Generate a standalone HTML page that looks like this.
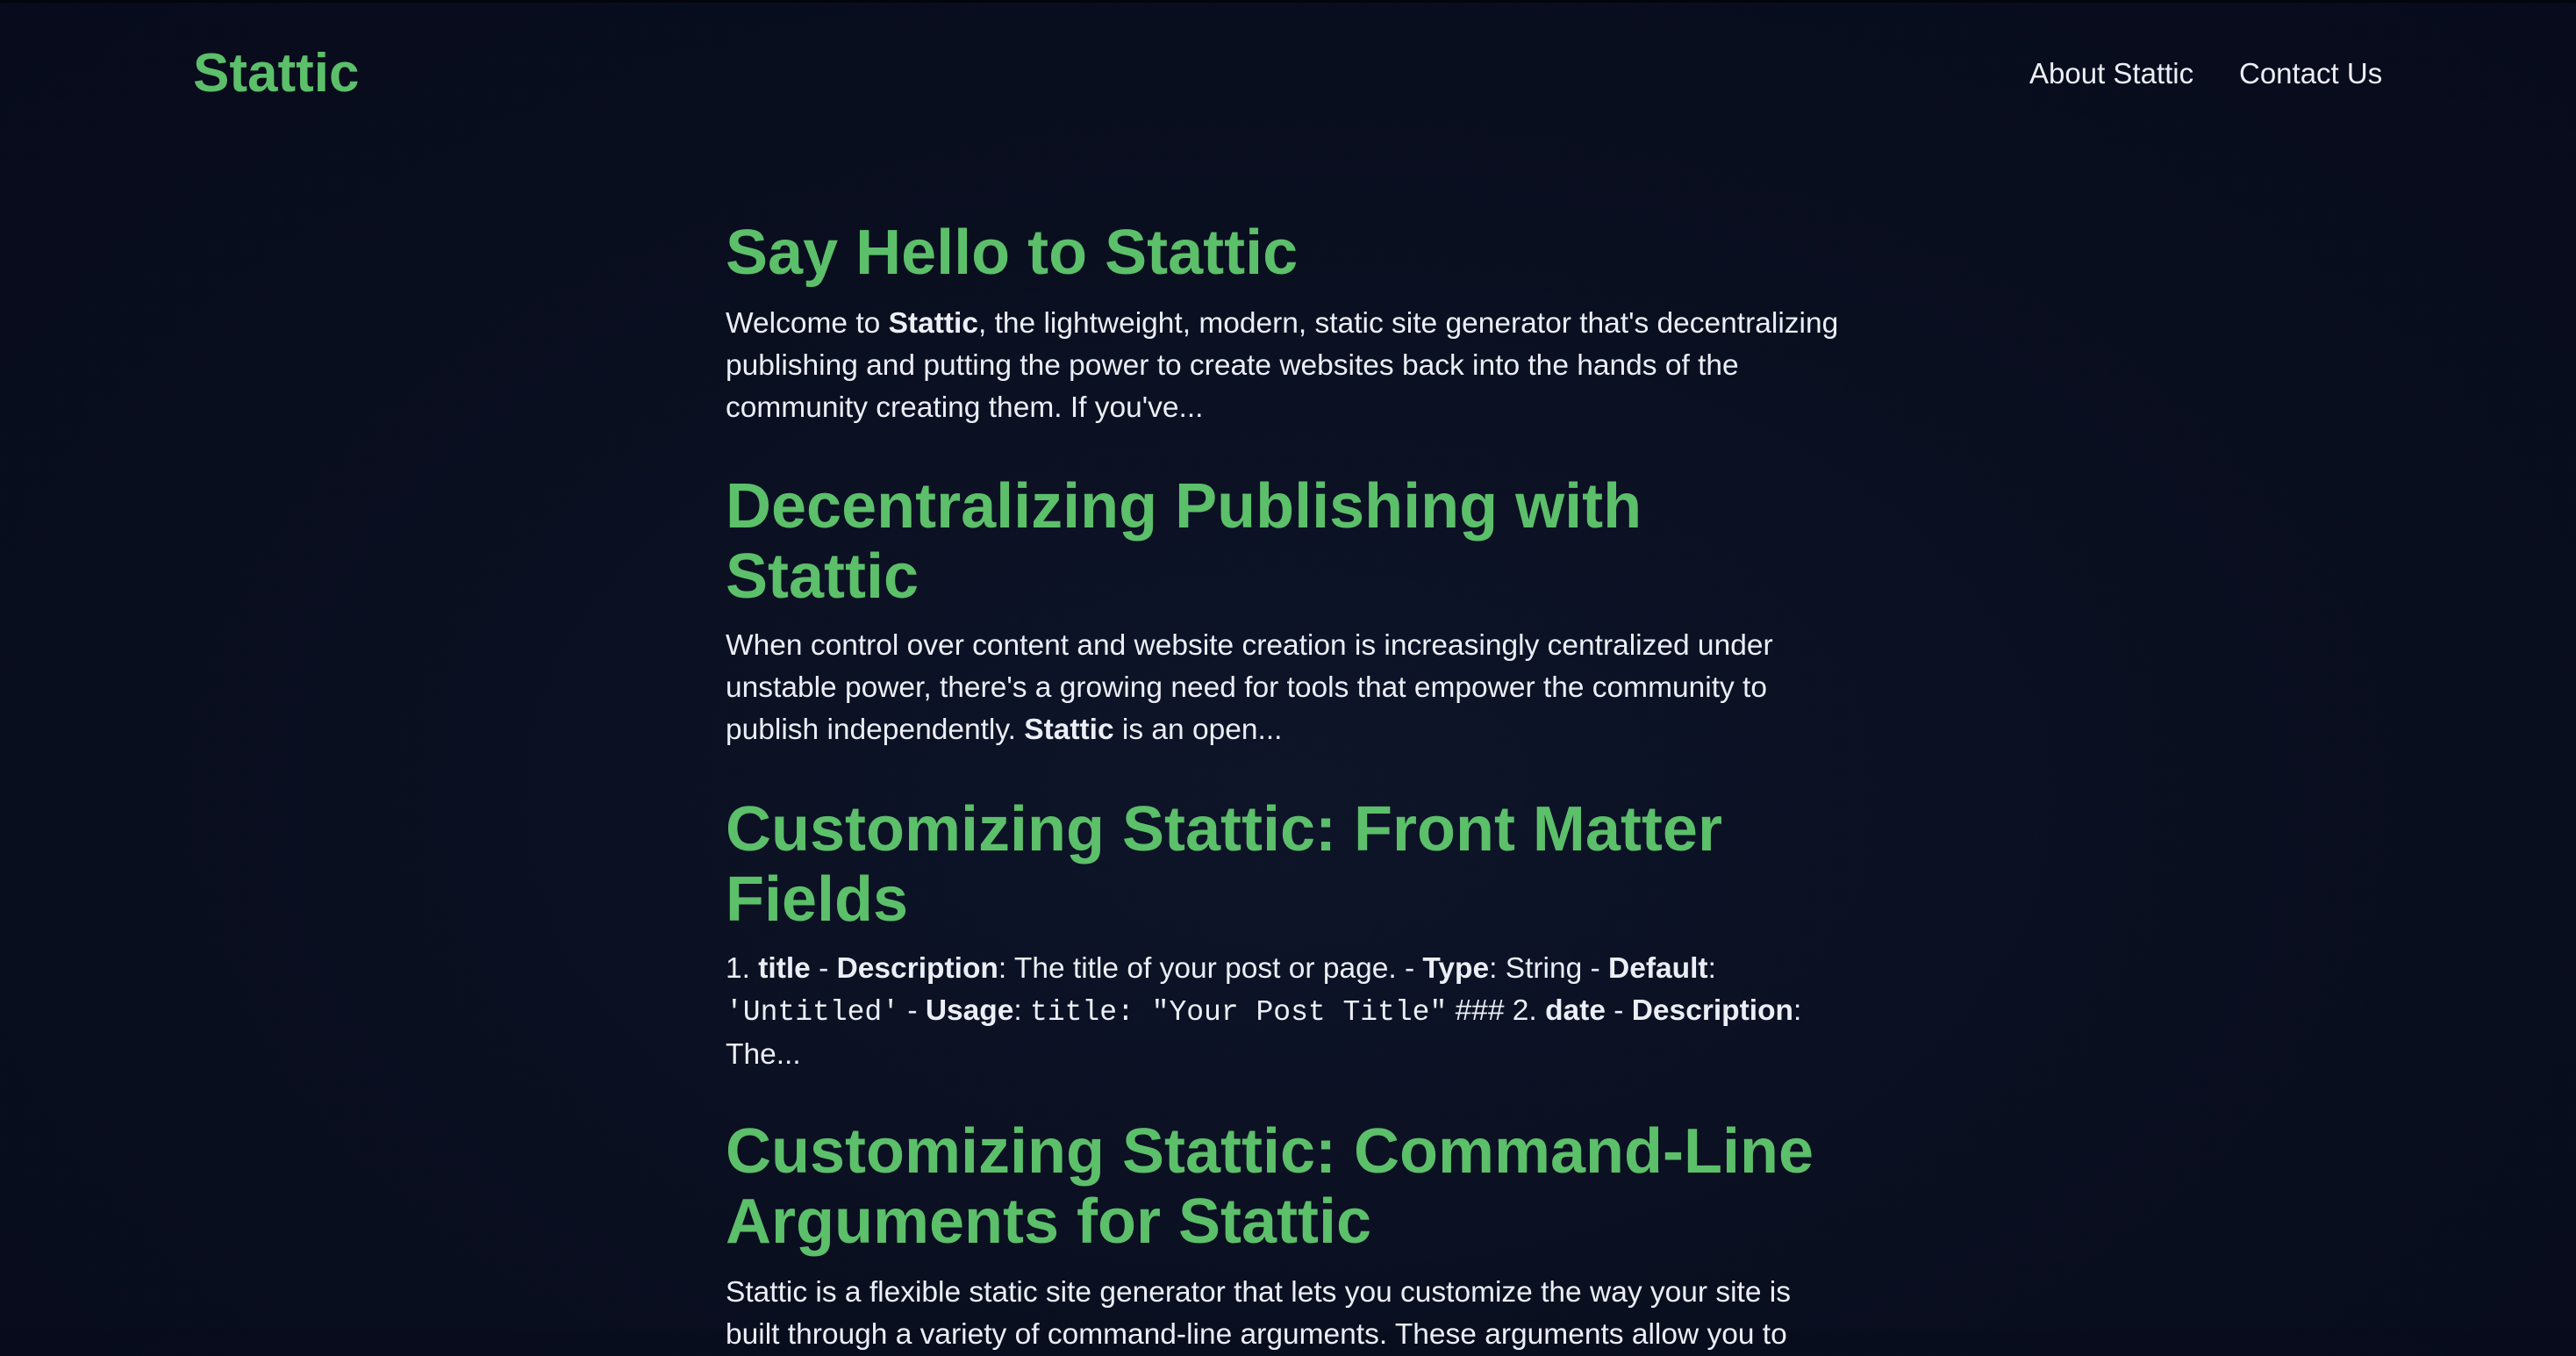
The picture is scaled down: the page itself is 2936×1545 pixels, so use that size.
<!DOCTYPE html>
<html><head><meta charset="utf-8"><style>
html,body{margin:0;padding:0}
body{width:2936px;height:1514px;overflow:hidden;position:relative;
background:radial-gradient(ellipse at 50% 60%,#0e1529 0%,#0a0f20 50%,#070b1b 100%);
font-family:"Liberation Sans",sans-serif;color:#eceef6}
.topline{position:absolute;left:0;top:0;width:100%;height:3px;background:#03050c}
.logo{position:absolute;left:220px;top:48px;font-size:62px;font-weight:bold;color:#5cbf6a;line-height:72px}
.nav{position:absolute;top:64px;font-size:33px;line-height:40px;color:#eceef6}
.h{position:absolute;left:827px;font-size:72px;font-weight:bold;color:#5cbf6a;line-height:80px;letter-spacing:0;white-space:nowrap;margin:0}
.p{position:absolute;left:827px;font-size:33.5px;line-height:48px;letter-spacing:0;white-space:nowrap;margin:0}
code{font-family:"Liberation Mono",monospace;font-size:33px}
</style></head><body>
<div class="topline"></div>
<div class="logo">Stattic</div>
<div class="nav" style="left:2313px">About Stattic</div>
<div class="nav" style="left:2552px">Contact Us</div>

<h1 class="h" style="top:248px">Say Hello to Stattic</h1>
<p class="p" style="top:345px">Welcome to <b>Stattic</b>, the lightweight, modern, static site generator that's decentralizing<br>publishing and putting the power to create websites back into the hands of the<br>community creating them. If you've...</p>

<h1 class="h" style="top:537px">Decentralizing Publishing with<br>Stattic</h1>
<p class="p" style="top:712px">When control over content and website creation is increasingly centralized under<br>unstable power, there's a growing need for tools that empower the community to<br>publish independently. <b>Stattic</b> is an open...</p>

<h1 class="h" style="top:905px">Customizing Stattic: Front Matter<br>Fields</h1>
<p class="p" style="top:1080px">1. <b>title</b> - <b>Description</b>: The title of your post or page. - <b>Type</b>: String - <b>Default</b>:<br><code>'Untitled'</code> - <b>Usage</b>: <code>title: "Your Post Title"</code> ### 2. <b>date</b> - <b>Description</b>:<br>The...</p>

<h1 class="h" style="top:1272px">Customizing Stattic: Command-Line<br>Arguments for Stattic</h1>
<p class="p" style="top:1449px">Stattic is a flexible static site generator that lets you customize the way your site is<br>built through a variety of command-line arguments. These arguments allow you to</p>
</body></html>
